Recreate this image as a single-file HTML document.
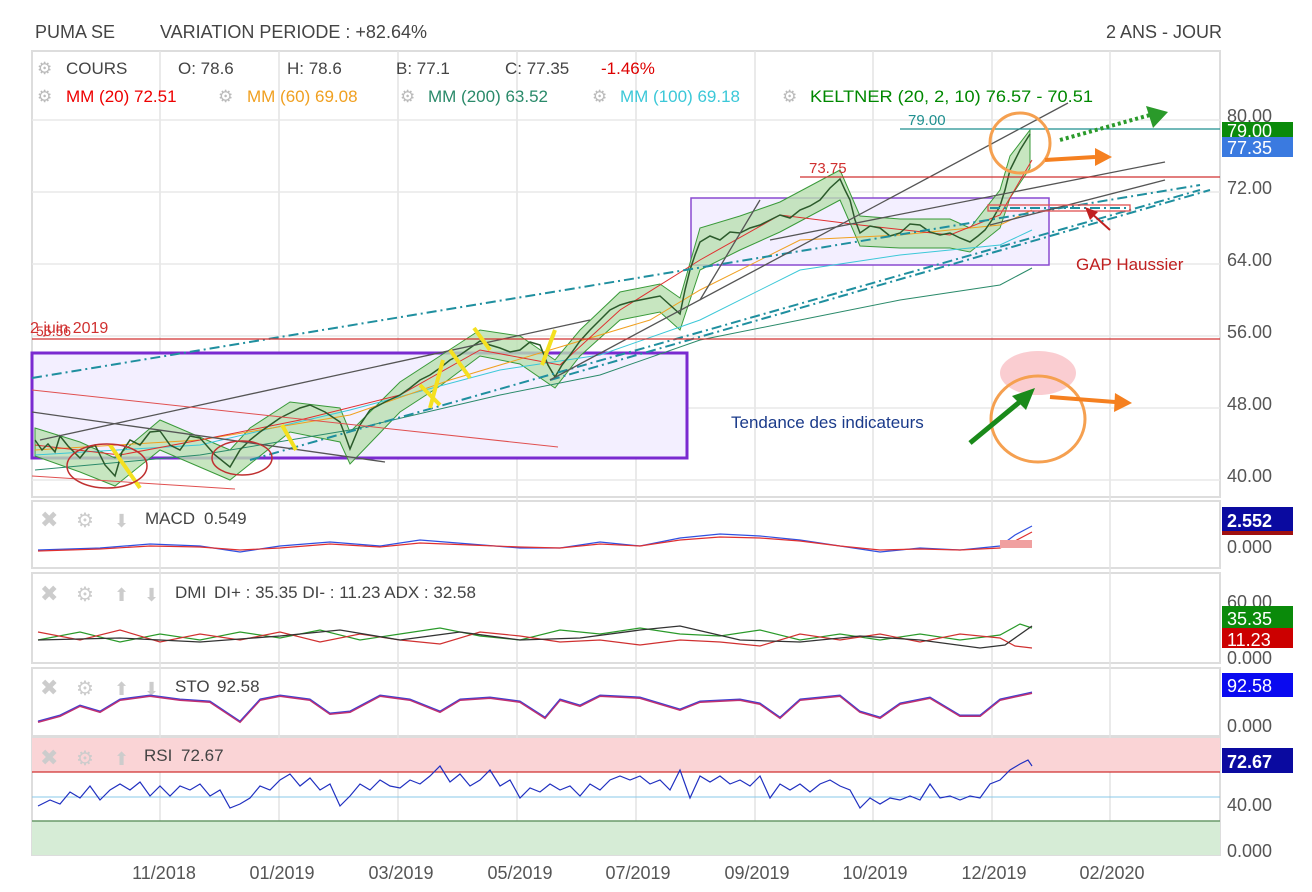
<!DOCTYPE html>
<html><head><meta charset="utf-8"><style>
body{margin:0;background:#fff;width:1312px;height:892px;overflow:hidden;font-family:"Liberation Sans",sans-serif;}
svg{position:absolute;left:0;top:0}
text{font-family:"Liberation Sans",sans-serif}
</style></head><body>
<svg width="1312" height="892" viewBox="0 0 1312 892">
<!-- header -->
<text x="35" y="38" font-size="18" fill="#444" textLength="80" lengthAdjust="spacingAndGlyphs">PUMA SE</text>
<text x="160" y="38" font-size="18" fill="#444" textLength="267" lengthAdjust="spacingAndGlyphs">VARIATION PERIODE : +82.64%</text>
<text x="1106" y="38" font-size="18" fill="#444" textLength="116" lengthAdjust="spacingAndGlyphs">2 ANS - JOUR</text>
<!-- panel frames -->
<g fill="none" stroke="#ddd" stroke-width="2">
<rect x="32" y="51" width="1188" height="446"/>
<rect x="32" y="501" width="1188" height="67"/>
<rect x="32" y="573" width="1188" height="90"/>
<rect x="32" y="668" width="1188" height="68"/>
<rect x="32" y="738" width="1188" height="117"/>
</g>
<!-- vertical grid -->
<g stroke="#e4e4e4" stroke-width="1.5">
<line x1="160" y1="51" x2="160" y2="855"/><line x1="279" y1="51" x2="279" y2="855"/><line x1="398" y1="51" x2="398" y2="855"/><line x1="517" y1="51" x2="517" y2="855"/><line x1="636" y1="51" x2="636" y2="855"/><line x1="755" y1="51" x2="755" y2="855"/><line x1="873" y1="51" x2="873" y2="855"/><line x1="992" y1="51" x2="992" y2="855"/><line x1="1110" y1="51" x2="1110" y2="855"/>
</g>
<g stroke="#e8e8e8" stroke-width="1.5">
<line x1="32" y1="120" x2="1220" y2="120"/><line x1="32" y1="192" x2="1220" y2="192"/><line x1="32" y1="264" x2="1220" y2="264"/><line x1="32" y1="336" x2="1220" y2="336"/><line x1="32" y1="408" x2="1220" y2="408"/><line x1="32" y1="480" x2="1220" y2="480"/>
</g>
<!-- legend -->
<g font-size="17">
<text x="37" y="74" fill="#bbb">⚙</text><text x="66" y="74" fill="#444">COURS</text>
<text x="178" y="74" fill="#444">O: 78.6</text><text x="287" y="74" fill="#444">H: 78.6</text>
<text x="396" y="74" fill="#444">B: 77.1</text><text x="505" y="74" fill="#444">C: 77.35</text>
<text x="601" y="74" fill="#d00">-1.46%</text>
<text x="37" y="102" fill="#bbb">⚙</text><text x="66" y="102" fill="#e00">MM (20) 72.51</text>
<text x="218" y="102" fill="#bbb">⚙</text><text x="247" y="102" fill="#f0a020">MM (60) 69.08</text>
<text x="400" y="102" fill="#bbb">⚙</text><text x="428" y="102" fill="#2a8a6a">MM (200) 63.52</text>
<text x="592" y="102" fill="#bbb">⚙</text><text x="620" y="102" fill="#3cc8d8">MM (100) 69.18</text>
<text x="782" y="102" fill="#bbb">⚙</text><text x="810" y="102" fill="#080" textLength="283" lengthAdjust="spacingAndGlyphs">KELTNER (20, 2, 10) 76.57 - 70.51</text>
</g>
<!-- rectangles -->
<rect x="32" y="353" width="655" height="105" fill="#f3efff" stroke="#7a2ad0" stroke-width="3"/>
<rect x="691" y="198" width="358" height="67" fill="#f3efff" stroke="#8a4ad0" stroke-width="1.5"/>
<!-- keltner band -->
<polygon fill="#b9e0b0" fill-opacity="0.8" stroke="#3a9a3a" stroke-width="1" points="35,428 80,442 115,458 160,420 230,450 250,428 290,402 340,408 350,432 400,382 440,356 480,330 520,336 555,360 580,330 620,292 660,284 680,298 700,228 740,216 780,202 840,170 860,216 900,219 950,219 970,228 1000,190 1010,156 1030,130 1030,168 1010,198 1000,228 970,252 950,248 900,248 860,246 840,200 780,232 740,250 700,270 680,330 660,312 620,320 580,356 555,388 520,364 480,356 440,386 400,412 350,464 340,442 290,432 250,464 230,480 160,450 115,486 80,472 35,456"/>
<!-- MAs -->
<polyline fill="none" stroke="#2a8a6a" stroke-width="1" points="35,470 200,455 350,430 500,395 600,375 700,340 800,320 900,300 1000,285 1032,268"/>
<polyline fill="none" stroke="#3cc8d8" stroke-width="1" points="35,455 200,445 350,410 500,370 600,355 700,320 800,270 900,255 1000,245 1032,230"/>
<polyline fill="none" stroke="#f0a020" stroke-width="1" points="35,450 200,440 350,415 450,380 550,350 650,320 700,290 800,240 900,235 1000,225 1032,210"/>
<polyline fill="none" stroke="#e03030" stroke-width="1" points="35,445 120,455 200,440 300,420 400,395 480,350 560,365 620,310 700,260 780,215 860,225 950,235 1000,215 1032,160"/>
<!-- price -->
<polyline fill="none" stroke="#2b5a2b" stroke-width="1.5" points="35,440 42,450 48,444 55,452 60,436 68,446 80,458 88,448 95,445 105,465 115,476 122,452 130,440 140,445 150,432 160,431 170,445 180,450 190,436 200,438 215,455 230,467 240,450 250,440 260,432 270,425 280,418 290,413 300,408 310,405 325,412 340,422 345,435 350,449 360,425 370,410 385,402 400,395 410,388 420,380 430,375 440,368 450,360 460,355 470,348 480,341 490,345 500,348 510,352 520,350 530,342 540,345 548,365 555,377 562,365 570,355 580,341 590,330 600,320 610,310 620,305 630,302 640,300 650,298 660,296 670,305 680,314 685,290 690,270 695,255 700,242 710,236 720,240 730,232 740,233 750,228 760,225 770,220 780,215 790,218 800,210 810,206 820,200 830,188 840,179 845,190 850,200 855,220 860,233 870,226 880,228 890,236 900,233 910,224 920,225 930,232 940,235 950,233 960,238 970,242 978,236 985,230 992,220 1000,206 1005,190 1010,170 1015,160 1020,150 1025,142 1030,134"/>
<!-- trend lines -->
<g stroke-width="2" fill="none">
<line x1="32" y1="378" x2="1200" y2="185" stroke="#1f8f9f" stroke-dasharray="10,4,2,4"/>
<line x1="250" y1="460" x2="1200" y2="190" stroke="#1f8f9f" stroke-dasharray="10,4,2,4"/>
<line x1="550" y1="380" x2="1210" y2="190" stroke="#1f8f9f" stroke-dasharray="10,4,2,4"/>
<line x1="990" y1="208" x2="1130" y2="208" stroke="#1f8f9f" stroke-dasharray="10,4,2,4"/>
</g>
<g stroke="#555" stroke-width="1.3">
<line x1="32" y1="412" x2="385" y2="462"/><line x1="40" y1="440" x2="590" y2="320"/>
<line x1="550" y1="380" x2="1068" y2="103"/><line x1="770" y1="240" x2="1165" y2="162"/>
<line x1="700" y1="300" x2="760" y2="200"/><line x1="990" y1="225" x2="1165" y2="180"/>
</g>
<g stroke="#e05050" stroke-width="1">
<line x1="32" y1="390" x2="558" y2="447"/><line x1="32" y1="476" x2="235" y2="489"/>
</g>
<line x1="800" y1="177" x2="1220" y2="177" stroke="#d03030" stroke-width="1.3"/>
<line x1="32" y1="339" x2="1220" y2="339" stroke="#d03030" stroke-width="1.3"/>
<line x1="900" y1="129" x2="1220" y2="129" stroke="#1f8f8f" stroke-width="1.3"/>
<rect x="988" y="205" width="142" height="6" fill="none" stroke="#e05050" stroke-width="1.3"/>
<text x="908" y="125" font-size="15" fill="#1f8f8f">79.00</text>
<text x="809" y="173" font-size="15" fill="#d03030">73.75</text>
<text x="30" y="333" font-size="16" fill="#d03030">2 juin 2019</text>
<text x="36" y="336" font-size="14" fill="#d03030">55.56</text>
<!-- yellow marks -->
<g stroke="#f4e020" stroke-width="4">
<line x1="110" y1="445" x2="140" y2="488"/><line x1="282" y1="425" x2="296" y2="450"/>
<line x1="420" y1="385" x2="440" y2="405"/><line x1="443" y1="360" x2="430" y2="408"/>
<line x1="450" y1="350" x2="470" y2="378"/><line x1="474" y1="328" x2="490" y2="350"/>
<line x1="555" y1="330" x2="542" y2="365"/>
</g>
<!-- ellipses -->
<g fill="none" stroke="#c03030" stroke-width="1.5">
<ellipse cx="107" cy="466" rx="40" ry="22"/><ellipse cx="242" cy="458" rx="30" ry="17"/>
</g>
<ellipse cx="1020" cy="143" rx="30" ry="30" fill="none" stroke="#f5a050" stroke-width="3"/>
<ellipse cx="1038" cy="373" rx="38" ry="22" fill="#f9c0c6" opacity="0.8"/>
<ellipse cx="1038" cy="419" rx="47" ry="43" fill="none" stroke="#f5a050" stroke-width="3"/>
<!-- arrows -->
<g stroke="#f58020" stroke-width="4" fill="#f58020">
<line x1="1045" y1="160" x2="1095" y2="157"/><polygon points="1095,148 1112,157 1095,166" stroke="none"/>
<line x1="1050" y1="397" x2="1115" y2="402"/><polygon points="1115,393 1132,403 1114,412" stroke="none"/>
</g>
<line x1="1060" y1="140" x2="1150" y2="115" stroke="#2a9a2a" stroke-width="4" stroke-dasharray="3,3"/>
<polygon points="1146,106 1168,112 1153,128" fill="#2a9a2a"/>
<line x1="970" y1="443" x2="1022" y2="400" stroke="#1a8a1a" stroke-width="5"/>
<polygon points="1012,396 1035,388 1026,410" fill="#1a8a1a"/>
<line x1="1110" y1="230" x2="1090" y2="212" stroke="#c02020" stroke-width="2"/>
<polygon points="1085,207 1098,212 1090,220" fill="#c02020"/>
<text x="1076" y="270" font-size="17" fill="#c02020">GAP Haussier</text>
<text x="731" y="428" font-size="17" fill="#1a3a8a">Tendance des indicateurs</text>
<!-- main y axis -->
<g font-size="18" fill="#555">
<text x="1227" y="122">80.00</text><text x="1227" y="194">72.00</text><text x="1227" y="266">64.00</text>
<text x="1227" y="338">56.00</text><text x="1227" y="410">48.00</text><text x="1227" y="482">40.00</text>
</g>
<rect x="1222" y="122" width="71" height="15" fill="#0a8a0a"/><text x="1227" y="137" font-size="18" fill="#fff">79.00</text>
<rect x="1222" y="137" width="71" height="20" fill="#3a7ae0"/><text x="1227" y="154" font-size="18" fill="#fff">77.35</text>
<!-- indicator panel labels -->
<g font-size="17" fill="#444">
<text x="40" y="527" fill="#ccc" font-size="22">✖</text><text x="76" y="527" fill="#ccc" font-size="20">⚙</text><text x="114" y="527" fill="#ccc" font-size="18">⬇</text><text x="145" y="524">MACD</text><text x="204" y="524">0.549</text>
<text x="40" y="601" fill="#ccc" font-size="22">✖</text><text x="76" y="601" fill="#ccc" font-size="20">⚙</text><text x="114" y="601" fill="#ccc" font-size="18">⬆</text><text x="144" y="601" fill="#ccc" font-size="18">⬇</text><text x="175" y="598">DMI</text><text x="214" y="598">DI+ : 35.35 DI- : 11.23 ADX : 32.58</text>
<text x="40" y="695" fill="#ccc" font-size="22">✖</text><text x="76" y="695" fill="#ccc" font-size="20">⚙</text><text x="114" y="695" fill="#ccc" font-size="18">⬆</text><text x="144" y="695" fill="#ccc" font-size="18">⬇</text><text x="175" y="692">STO</text><text x="217" y="692">92.58</text>
</g>
<!-- MACD -->
<polyline fill="none" stroke="#3050e0" stroke-width="1.2" points="38,550 100,548 150,544 200,546 240,552 280,546 330,542 380,546 420,540 470,544 520,548 560,548 600,542 640,546 680,538 720,534 760,536 800,540 840,546 880,552 920,548 960,550 1000,546 1015,535 1032,526"/>
<polyline fill="none" stroke="#e03030" stroke-width="1.2" points="38,551 100,549 150,546 200,547 240,550 280,548 330,544 380,547 420,543 470,545 520,547 560,548 600,544 640,546 680,540 720,537 760,538 800,541 840,546 880,550 920,549 960,550 1000,548 1015,541 1032,532"/>
<rect x="1000" y="540" width="32" height="8" fill="#f0a0a0"/>
<text x="1227" y="553" font-size="18" fill="#555">0.000</text>
<rect x="1222" y="507" width="71" height="24" fill="#0a0aa0"/><rect x="1222" y="531" width="71" height="4" fill="#a01010"/>
<text x="1227" y="527" font-size="18" fill="#fff" font-weight="bold">2.552</text>
<!-- DMI -->
<polyline fill="none" stroke="#2a9a2a" stroke-width="1.2" points="38,640 80,632 120,642 160,634 200,640 240,632 280,638 320,630 360,640 400,634 440,628 480,636 520,640 560,630 600,634 640,628 680,634 720,636 760,630 800,640 840,634 880,640 920,634 960,640 1000,635 1020,624 1032,628"/>
<polyline fill="none" stroke="#d03030" stroke-width="1.2" points="38,632 80,640 120,630 160,642 200,634 240,640 280,632 320,642 360,634 400,640 440,644 480,632 520,636 560,642 600,640 640,645 680,640 720,642 760,646 800,634 840,640 880,634 920,642 960,634 1000,638 1015,646 1032,648"/>
<polyline fill="none" stroke="#333" stroke-width="1.3" points="38,640 120,638 200,642 280,636 340,630 400,640 460,632 520,640 580,638 640,630 680,626 740,640 800,642 860,636 920,640 980,648 1005,645 1032,626"/>
<text x="1227" y="608" font-size="18" fill="#555">60.00</text><text x="1227" y="664" font-size="18" fill="#555">0.000</text>
<rect x="1222" y="606" width="71" height="22" fill="#0a8a0a"/><text x="1227" y="625" font-size="18" fill="#fff">35.35</text>
<rect x="1222" y="628" width="71" height="20" fill="#c00"/><text x="1227" y="646" font-size="18" fill="#fff">11.23</text>
<!-- STO -->
<polyline fill="none" stroke="#c03070" stroke-width="2" points="38,722 60,716 80,706 100,712 120,700 150,696 180,700 210,702 240,722 260,700 280,696 310,700 330,714 350,712 380,696 410,700 440,712 460,700 490,698 520,702 545,718 560,700 580,706 600,696 640,698 680,710 700,702 740,700 760,704 780,718 800,700 840,696 860,712 880,718 900,704 930,698 960,716 980,716 1000,700 1032,693"/>
<polyline fill="none" stroke="#4040d0" stroke-width="1" points="38,721 60,715 80,705 100,711 120,699 150,695 180,699 210,701 240,721 260,699 280,695 310,699 330,713 350,711 380,695 410,699 440,711 460,699 490,697 520,701 545,717 560,699 580,705 600,695 640,697 680,709 700,701 740,699 760,703 780,717 800,699 840,695 860,711 880,717 900,703 930,697 960,715 980,715 1000,699 1032,692"/>
<text x="1227" y="732" font-size="18" fill="#555">0.000</text>
<rect x="1222" y="673" width="71" height="24" fill="#0a0af0"/><text x="1227" y="692" font-size="18" fill="#fff">92.58</text>
<!-- RSI -->
<rect x="32" y="738" width="1188" height="34" fill="#fad4d6"/>
<rect x="32" y="821" width="1188" height="34" fill="#d6ecd6"/>
<line x1="32" y1="772" x2="1220" y2="772" stroke="#d03030" stroke-width="1.3"/>
<line x1="32" y1="797" x2="1220" y2="797" stroke="#8ac8e8" stroke-width="1"/>
<line x1="32" y1="821" x2="1220" y2="821" stroke="#6a9a6a" stroke-width="1.5"/>
<text x="40" y="765" fill="#ccc" font-size="22">✖</text><text x="76" y="765" fill="#ccc" font-size="20">⚙</text><text x="114" y="765" fill="#ccc" font-size="18">⬆</text>
<text x="144" y="761" font-size="17" fill="#444">RSI</text><text x="181" y="761" font-size="17" fill="#444">72.67</text>
<polyline fill="none" stroke="#2030c0" stroke-width="1.2" points="38,806 50,800 60,804 70,792 80,798 90,786 100,800 110,790 120,784 130,790 140,782 150,796 160,786 170,796 180,786 190,790 200,784 210,796 220,790 230,808 240,804 250,798 260,786 270,790 280,780 290,774 300,786 310,778 320,790 330,784 340,806 350,796 360,784 370,790 380,780 390,786 400,788 410,780 420,784 430,776 440,766 450,782 460,774 470,786 480,780 490,770 500,786 510,780 520,798 530,788 540,792 550,784 560,790 570,786 580,796 590,784 600,790 610,780 620,776 630,780 640,776 650,784 660,780 670,790 680,770 690,798 700,776 710,782 720,776 730,784 740,780 750,786 760,776 770,798 780,784 790,790 800,784 810,792 820,784 830,780 840,786 850,790 860,808 870,798 880,804 890,798 900,800 910,796 920,800 930,784 940,798 950,796 960,800 970,796 980,798 990,784 1000,780 1010,770 1020,764 1028,760 1032,766"/>
<text x="1227" y="811" font-size="18" fill="#555">40.00</text><text x="1227" y="857" font-size="18" fill="#555">0.000</text>
<rect x="1222" y="748" width="71" height="25" fill="#0a0aa0"/><text x="1227" y="768" font-size="18" fill="#fff" font-weight="bold">72.67</text>
<!-- x axis -->
<g font-size="18" fill="#555" text-anchor="middle">
<text x="164" y="879">11/2018</text><text x="282" y="879">01/2019</text><text x="401" y="879">03/2019</text><text x="520" y="879">05/2019</text><text x="638" y="879">07/2019</text><text x="757" y="879">09/2019</text><text x="875" y="879">10/2019</text><text x="994" y="879">12/2019</text><text x="1112" y="879">02/2020</text>
</g>
</svg>
</body></html>
